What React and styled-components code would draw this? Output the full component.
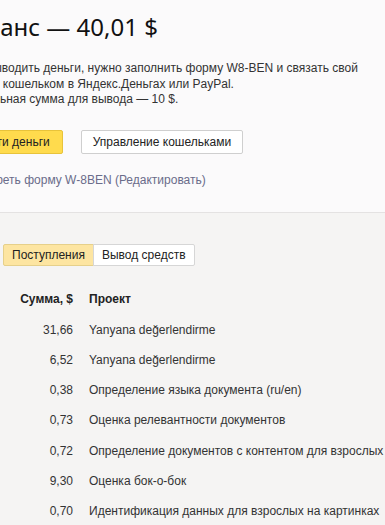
import React from "react";
import styled, { createGlobalStyle } from "styled-components";

const Global = createGlobalStyle`
  html, body { margin: 0; padding: 0; }
  body {
    background: #f5f4f3;
    overflow: hidden;
    font-family: "Liberation Sans", Arial, sans-serif;
    color: #333;
  }
`;

const Page = styled.div`
  width: 385px;
  height: 525px;
  overflow: hidden;
`;

const Top = styled.section`
  background: #fbfafb;
  border-bottom: 1px solid #e4e2e2;
  padding: 12px 0 24px 0;
  margin-left: -52px;
  width: 480px;
`;

const Title = styled.h1`
  margin: 0;
  padding-left: 10px;
  font-family: "Noto Sans", sans-serif;
  font-weight: 400;
  font-size: 24px;
  line-height: 30px;
  color: #111;
  white-space: nowrap;
`;

const Info = styled.p`
  margin: 19px 0 0 0;
  font-size: 12px;
  line-height: 15.5px;
  color: #333;
  white-space: nowrap;
`;

const Buttons = styled.div`
  display: flex;
  gap: 18px;
  margin-top: 22px;
`;

const Button = styled.button`
  height: 24px;
  padding: ${(p) => (p.$primary ? "0 12px" : "0 11px")};
  font-family: "Liberation Sans", Arial, sans-serif;
  font-size: 12px;
  color: #222;
  border-radius: 2px;
  cursor: pointer;
  background: ${(p) => (p.$primary ? "#ffdb4d" : "#fff")};
  border: 1px solid ${(p) => (p.$primary ? "#e8c33a" : "#cfcfcf")};
`;

const LinkLine = styled.div`
  margin-top: 18px;
  font-size: 12px;
  line-height: 16px;
  color: #6a6c8a;
  white-space: nowrap;
`;

const Bottom = styled.section`
  padding: 31px 0 0 3px;
`;

const Tabs = styled.div`
  display: flex;
`;

const Tab = styled.button`
  height: 22px;
  padding: 0 8px;
  font-family: "Liberation Sans", Arial, sans-serif;
  font-size: 12px;
  color: #222;
  background: ${(p) => (p.$active ? "#fde5a1" : "#fff")};
  border: 1px solid ${(p) => (p.$active ? "#e6d08a" : "#d6d6d6")};
  border-radius: ${(p) => (p.$first ? "2px 0 0 2px" : "0 2px 2px 0")};
  margin-left: ${(p) => (p.$first ? "0" : "-1px")};
  cursor: pointer;
`;

const Table = styled.div`
  margin-top: 17px;
  display: grid;
  grid-template-columns: 70px 1fr;
  column-gap: 16px;
  font-size: 12px;
`;

const HeadCell = styled.div`
  height: 32px;
  line-height: 32px;
  font-weight: 700;
  color: #222;
  text-align: ${(p) => (p.$right ? "right" : "left")};
  white-space: nowrap;
`;

const Cell = styled.div`
  height: 30.33px;
  line-height: 30.33px;
  color: #333;
  text-align: ${(p) => (p.$right ? "right" : "left")};
  white-space: nowrap;
`;

const rows = [
  ["31,66", "Yanyana değerlendirme"],
  ["6,52", "Yanyana değerlendirme"],
  ["0,38", "Определение языка документа (ru/en)"],
  ["0,73", "Оценка релевантности документов"],
  ["0,72", "Определение документов с контентом для взрослых"],
  ["9,30", "Оценка бок-о-бок"],
  ["0,70", "Идентификация данных для взрослых на картинках"],
];

export default function App() {
  return (
    <Page>
      <Global />
      <Top>
        <Title>Баланс — 40,01 $</Title>
        <Info>
          Чтобы выводить деньги, нужно заполнить форму W8-BEN и связать свой
          <br />
          аккаунт с кошельком в Яндекс.Деньгах или PayPal.
          <br />
          Минимальная сумма для вывода — 10 $.
        </Info>
        <Buttons>
          <Button $primary>Вывести деньги</Button>
          <Button>Управление кошельками</Button>
        </Buttons>
        <LinkLine>Просмотреть форму W-8BEN (Редактировать)</LinkLine>
      </Top>
      <Bottom>
        <Tabs>
          <Tab $active $first>Поступления</Tab>
          <Tab>Вывод средств</Tab>
        </Tabs>
        <Table>
          <HeadCell $right>Сумма, $</HeadCell>
          <HeadCell>Проект</HeadCell>
          {rows.map(([a, p], i) => (
            <React.Fragment key={i}>
              <Cell $right>{a}</Cell>
              <Cell>{p}</Cell>
            </React.Fragment>
          ))}
        </Table>
      </Bottom>
    </Page>
  );
}
